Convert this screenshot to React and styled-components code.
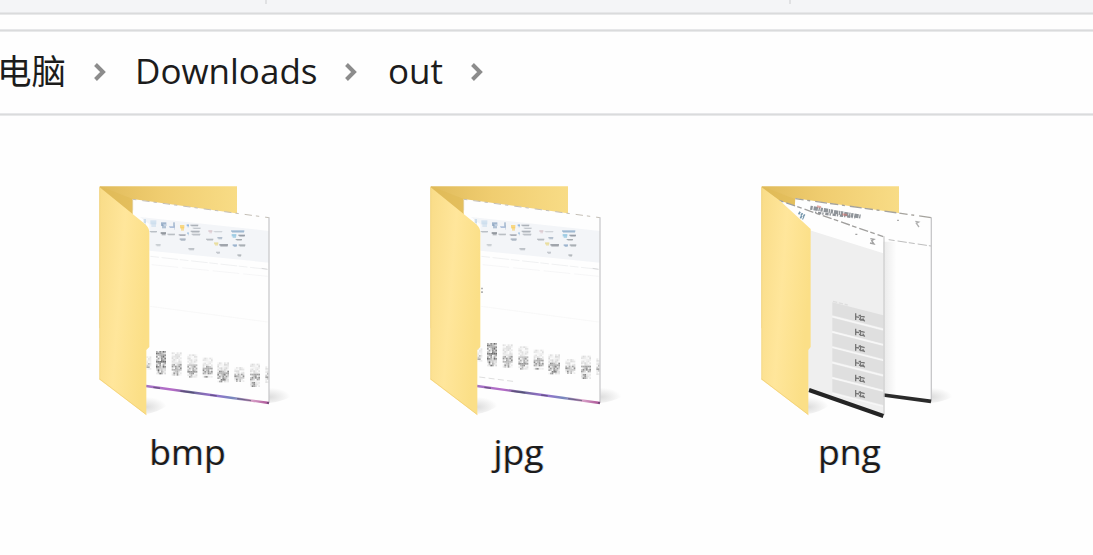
import React from 'react';
import styled, { createGlobalStyle } from 'styled-components';

const GlobalStyle = createGlobalStyle`
  body {
    margin: 0;
    background: #fefefe;
    color: #1c1c1c;
    font-family: "Open Sans", "Noto Sans", "Noto Sans CJK SC", sans-serif;
    overflow: hidden;
  }
`;

const Window = styled.div`
  display: flex;
  flex-direction: column;
  height: 555px;
  overflow: hidden;
`;

const Ribbon = styled.div`
  display: flex;
  gap: 522px;
  height: 12px;
  padding-left: 265px;
  background: #f4f5f7;
`;

const Divider = styled.div`
  width: 2px;
  height: 4px;
  background: #e0e1e3;
`;

const Rule = styled.div`
  flex: none;
  height: 3px;
  background: linear-gradient(#e6e7e9 1px, #dadbdc 1px 2px, #e8e9ea 2px);
`;

const Gap = styled.div`
  height: 14px;
`;

const AddressBar = styled.nav`
  display: flex;
  align-items: center;
  height: 81px;
  margin-left: -3px;
`;

const Crumb = styled.span`
  font-size: 35px;
  line-height: 48px;
  margin-top: -3px;
  white-space: nowrap;
`;

const CjkCrumb = styled(Crumb)`
  font-family: "Noto Sans CJK SC", sans-serif;
  font-size: 34.5px;
  margin-top: -8px;
`;

const Chevron = styled.svg`
  flex: none;
  width: 14px;
  height: 20px;
  margin: -1px ${props => props.$after || 28}px 0 27px;
`;

const Files = styled.main`
  display: flex;
  gap: 126px;
  padding: 59px 0 0 85px;
`;

const Tile = styled.div`
  display: flex;
  flex-direction: column;
  align-items: center;
  flex: none;
  width: 205px;
`;

const Icon = styled.svg`
  width: 205px;
  height: 250px;
`;

const Label = styled.span`
  font-size: 35.5px;
  line-height: 48px;
  margin-top: 2px;
  text-shadow: -1px 0 rgba(240, 150, 60, 0.3), 1px 0 rgba(60, 150, 240, 0.3);
`;

const Separator = ({ after }) => (
  <Chevron $after={after} viewBox="0 0 14 20">
    <path d="M2.5 2.5 10 10 2.5 17.5" fill="none" stroke="#8c8c8c" strokeWidth="4" />
  </Chevron>
);

// [x, y, width, height, colour] of each mark on the ribbon of the preview page
const RIBBON_MARKS = [
  [176, 132, 7, 20, '#c3d5e6'], [196, 136, 18, 20, '#c9dced'], [194, 168, 22, 5, '#aeb4bb'],
  [228, 142, 16, 18, '#849fbd'], [235, 148, 8, 6, '#e6edf5'], [252, 154, 18, 5, '#92acd0'],
  [264, 142, 6, 22, '#a1b5ce'], [227, 171, 16, 10, '#858b93'], [247, 176, 23, 5, '#a5abb1'],
  [285, 150, 13, 17, '#f8cd60'], [281, 178, 21, 5, '#8d939c'], [284, 190, 18, 8, '#9faab9'],
  [305, 148, 7, 9, '#80abdc'], [316, 149, 24, 5, '#9299a1'], [323, 158, 24, 4, '#aeb4ba'],
  [306, 172, 6, 9, '#a2c1df'], [317, 167, 27, 6, '#9ba1a9'], [320, 176, 26, 6, '#afb4ba'],
  [370, 165, 12, 10, '#dac7cd'], [386, 169, 26, 3, '#b9bec4'], [363, 191, 22, 6, '#a6abb2'],
  [397, 186, 15, 7, '#a2b0c1'], [387, 202, 13, 10, '#e7d98e'], [403, 207, 26, 8, '#888e96'],
  [438, 166, 40, 7, '#87a8c7'], [440, 177, 14, 12, '#8fc4e0'], [460, 179, 20, 6, '#7f8791'],
  [452, 192, 19, 5, '#92999f'], [443, 208, 13, 8, '#8aa7c5'], [461, 208, 20, 7, '#959ca3'],
  [212, 207, 15, 7, '#bfc4ca'], [310, 219, 18, 7, '#aeb3b9'], [393, 230, 12, 7, '#b9bec4'],
  [457, 238, 12, 7, '#a3a8ae'],
];

// icon captions in the lower part of the page: [x, y, width, height, strength]
const CAPTIONS = [
  [184, 544, 15, 42, 0.45], [213, 528, 30, 70, 0.8], [260, 532, 31, 72, 0.6],
  [307, 538, 32, 72, 0.58], [353, 548, 32, 60, 0.62], [397, 562, 36, 62, 0.68],
  [448, 576, 31, 43, 0.62], [495, 566, 30, 68, 0.66], [541, 574, 9, 51, 0.6],
];

const Caption = ({ mark: [x, y, w, h, strength], shift }) => {
  const cols = Math.max(2, Math.round(w / 5));
  const rows = Math.round(h / 5);
  const cells = [];
  for (let r = 0; r < rows; r++) {
    for (let c = 0; c < cols; c++) {
      const noise = ((r * 37 + c * 59 + x * 13 + r * c * 23) % 97) / 97;
      // captions thin out above and narrow towards the bottom
      const weight = r < rows * 0.4 ? (strength > 0.7 ? 1 : 0.3) : 1;
      const edge = r > rows * 0.75 && (c < 1 || c > cols - 3) ? 0.25 : 1;
      cells.push(
        <rect
          key={`${r}-${c}`}
          x={x + c * 5}
          y={y + shift + r * 5}
          width="5"
          height="5"
          opacity={noise * weight * edge}
        />
      );
    }
  }
  return <g fill="#444" opacity={strength}>{cells}</g>;
};

const DocumentPage = ({ variant }) => (
  <g>
    <path d="M143 72 552 128V685L183 633V400L143 300Z" fill="#fefefe" />
    <path d="M165 126 552 168V263L193 227V148Z" fill="#f3f5f8" />
    {RIBBON_MARKS.map(([x, y, w, h, color]) => (
      <g key={`${x}-${y}`} fill={color}>
        <rect x={x} y={y} width={w} height={h * 0.6} opacity=".75" />
        <rect x={x + 3} y={y + h * 0.35} width={w - 4} height={h * 0.65} opacity=".6" />
      </g>
    ))}
    <g fill="none" stroke="#e9eaec" strokeWidth="2">
      <path d="M196 244 548 283" strokeDasharray="26 8 50 5" />
      <path d="M200 269 548 304" stroke="#f2f2f3" strokeDasharray="80 12" />
      <path d="M195 394 548 441" stroke="#f4f4f4" />
      <path d="M530 280 548 283" stroke="#c8cacc" />
    </g>
    {CAPTIONS.map(mark => (
      <Caption key={mark[0]} mark={mark} shift={variant === 'jpg' ? -24 : 0} />
    ))}
    {variant === 'jpg' && (
      <g>
        <path d="M198 338v18" stroke="#a6a6a6" strokeWidth="5" strokeDasharray="5 6" />
        <path d="M190 606 298 620" stroke="#dedede" strokeWidth="3" strokeDasharray="18 10" />
      </g>
    )}
    <path d="M144 73 552 128" fill="none" stroke="#c4bfb6" strokeWidth="3" strokeDasharray="10 18 22 12" />
    <path d="M143 72V106" stroke="#dccb9c" strokeWidth="2" />
    <path d="M552 127V683" stroke="#cbcbcd" strokeWidth="4" />
    <path d="M183 633 552 684" stroke="url(#taskbar)" strokeWidth="7" />
    <path d="M205 637 552 684" stroke="#4c4566" strokeWidth="4" strokeDasharray="20 62 42 48" opacity=".65" />
  </g>
);

const MENU_ROWS = [0, 1, 2, 3, 4, 5];

const PhonePages = () => (
  <g>
    <path d="M145 70 553 128V680L400 662V190L143 98Z" fill="#fefefe" />
    <path d="M405 200H448V662L405 660Z" fill="url(#pageShade)" />
    <path d="M145 71 553 128" fill="none" stroke="#a5a39d" strokeWidth="4" strokeDasharray="25 11 9 15 36 9" />
    <path d="M553 127V680" stroke="#c8c8ca" strokeWidth="4" />
    <path d="M425 194 552 213" stroke="#bdbdbd" strokeWidth="3" strokeDasharray="18 9 28 6" />
    <path d="M190 98 342 125" stroke="#8f9499" strokeWidth="12" strokeDasharray="7 3 13 2 4 2" />
    <path d="M204 113 325 127" stroke="#8d9196" strokeWidth="7" strokeDasharray="4 5 10 3" />
    <path d="M210 94 222 97M286 118 300 120" stroke="#d67770" strokeWidth="6" opacity=".6" />
    <path d="M450 136h6M505 139l10 2-7 4 8 11" fill="none" stroke="#b0b0b0" strokeWidth="4" />
    <path d="M409 660 552 679" stroke="#2b2b2b" strokeWidth="11" />

    <path d="M96 76 409 185V723L182 645V520L170 512V162Z" fill="#fefefe" />
    <path d="M186 165 409 235V723L182 645V520L186 512Z" fill="#efefef" />
    <path d="M96 76 409 185" fill="none" stroke="#a09f9d" strokeWidth="4" strokeDasharray="14 9 28 7" />
    <path d="M155 113 173 123M160 125 170 130" stroke="#7596ac" strokeWidth="9" strokeDasharray="5 3" />
    <path d="M325 178h6M370 191l11 2-7 4 7 10-12-3" fill="none" stroke="#a2a2a2" strokeWidth="4" />
    <path d="M258 379 302 390" stroke="#dedede" strokeWidth="4" strokeDasharray="13 5" />
    {MENU_ROWS.map(i => (
      <g key={i} transform={`translate(0 ${i * 46})`}>
        <path d="M256 382 409 421V460L256 421Z" fill="#dfdfdf" />
        <path d="M256 425 409 464" stroke="#f7f7f7" strokeWidth="4" />
        <path d="M326 415v20M326 425l10 2M340 419l1 18M335 421l18 5M347 430l6 9M336 432l14 4" fill="none" stroke="#777" strokeWidth="4" />
      </g>
    ))}
    <path d="M411 184V720" stroke="#cfcfcf" strokeWidth="4" />
    <path d="M186 645 409 723" stroke="#242424" strokeWidth="12" />
  </g>
);

const FolderIcon = ({ variant }) => (
  <Icon viewBox="0 0 615 750">
    <path d="M552 630Q610 645 620 664Q590 680 552 684Z" fill="url(#shadowRight)" />
    <path d="M183 650Q240 674 252 688Q220 712 183 717Z" fill="url(#shadowLeft)" />
    <path d="M44 34H456V460H44Z" fill="url(#folderBack)" />
    <path d="M44 34 143 72V118Z" fill="#dfb954" opacity=".5" />
    {variant === 'png' ? <PhonePages /> : <DocumentPage variant={variant} />}
    <path
      d={variant === 'png'
        ? 'M44 37 100 78 191 162V516L184 525V720L44 614Z'
        : 'M44 37 180 147Q193 158 193 173V516L184 525V720L44 614Z'}
      fill="url(#folderFront)"
    />
    <path d="M44 36V614" stroke="#f1d278" strokeWidth="2" />
    <path d="M44 612 184 719" stroke="#f0cc70" strokeWidth="2" />
  </Icon>
);

const HiddenSvg = styled.svg`
  display: block;
  width: 0;
  height: 0;
`;

const Gradients = () => (
  <HiddenSvg>
    <defs>
      <linearGradient id="folderBack" x1="0" x2="1">
        <stop offset="0" stopColor="#e0bb5b" />
        <stop offset=".45" stopColor="#f0cd70" />
        <stop offset="1" stopColor="#f8dc86" />
      </linearGradient>
      <linearGradient id="folderFront" x1="0" y1="0" x2="1" y2=".35">
        <stop offset="0" stopColor="#f9dc88" />
        <stop offset=".5" stopColor="#ffe69b" />
        <stop offset="1" stopColor="#fbdf87" />
      </linearGradient>
      <linearGradient id="pageShade" x1="0" x2="1">
        <stop offset="0" stopColor="#e8e8e8" />
        <stop offset="1" stopColor="#fefefe" />
      </linearGradient>
      <linearGradient id="taskbar" gradientUnits="userSpaceOnUse" x1="183" x2="552" y1="0" y2="0">
        <stop offset="0" stopColor="#a373c5" />
        <stop offset=".22" stopColor="#b56bc7" />
        <stop offset=".36" stopColor="#686894" />
        <stop offset=".55" stopColor="#9b70d0" />
        <stop offset=".7" stopColor="#7687bd" />
        <stop offset=".85" stopColor="#dca7cc" />
        <stop offset="1" stopColor="#a94f94" />
      </linearGradient>
      <radialGradient
        id="shadowRight"
        gradientUnits="userSpaceOnUse"
        cx="0"
        cy="0"
        r="1"
        gradientTransform="translate(552 666) scale(64 28)"
      >
        <stop offset="0" stopColor="#dcdcdc" />
        <stop offset="1" stopColor="#fefefe" />
      </radialGradient>
      <radialGradient
        id="shadowLeft"
        gradientUnits="userSpaceOnUse"
        cx="0"
        cy="0"
        r="1"
        gradientTransform="translate(183 696) scale(62 30)"
      >
        <stop offset="0" stopColor="#dcdcdc" />
        <stop offset="1" stopColor="#fefefe" />
      </radialGradient>
    </defs>
  </HiddenSvg>
);

const App = () => (
  <Window>
    <GlobalStyle />
    <Gradients />
    <Ribbon>
      <Divider />
      <Divider />
    </Ribbon>
    <Rule />
    <Gap />
    <Rule />
    <AddressBar>
      <CjkCrumb>电脑</CjkCrumb>
      <Separator />
      <Crumb>Downloads</Crumb>
      <Separator after={29.5} />
      <Crumb>out</Crumb>
      <Separator after={26} />
    </AddressBar>
    <Rule />
    <Files>
      {['bmp', 'jpg', 'png'].map(name => (
        <Tile key={name}>
          <FolderIcon variant={name} />
          <Label>{name}</Label>
        </Tile>
      ))}
    </Files>
  </Window>
);

export default App;
